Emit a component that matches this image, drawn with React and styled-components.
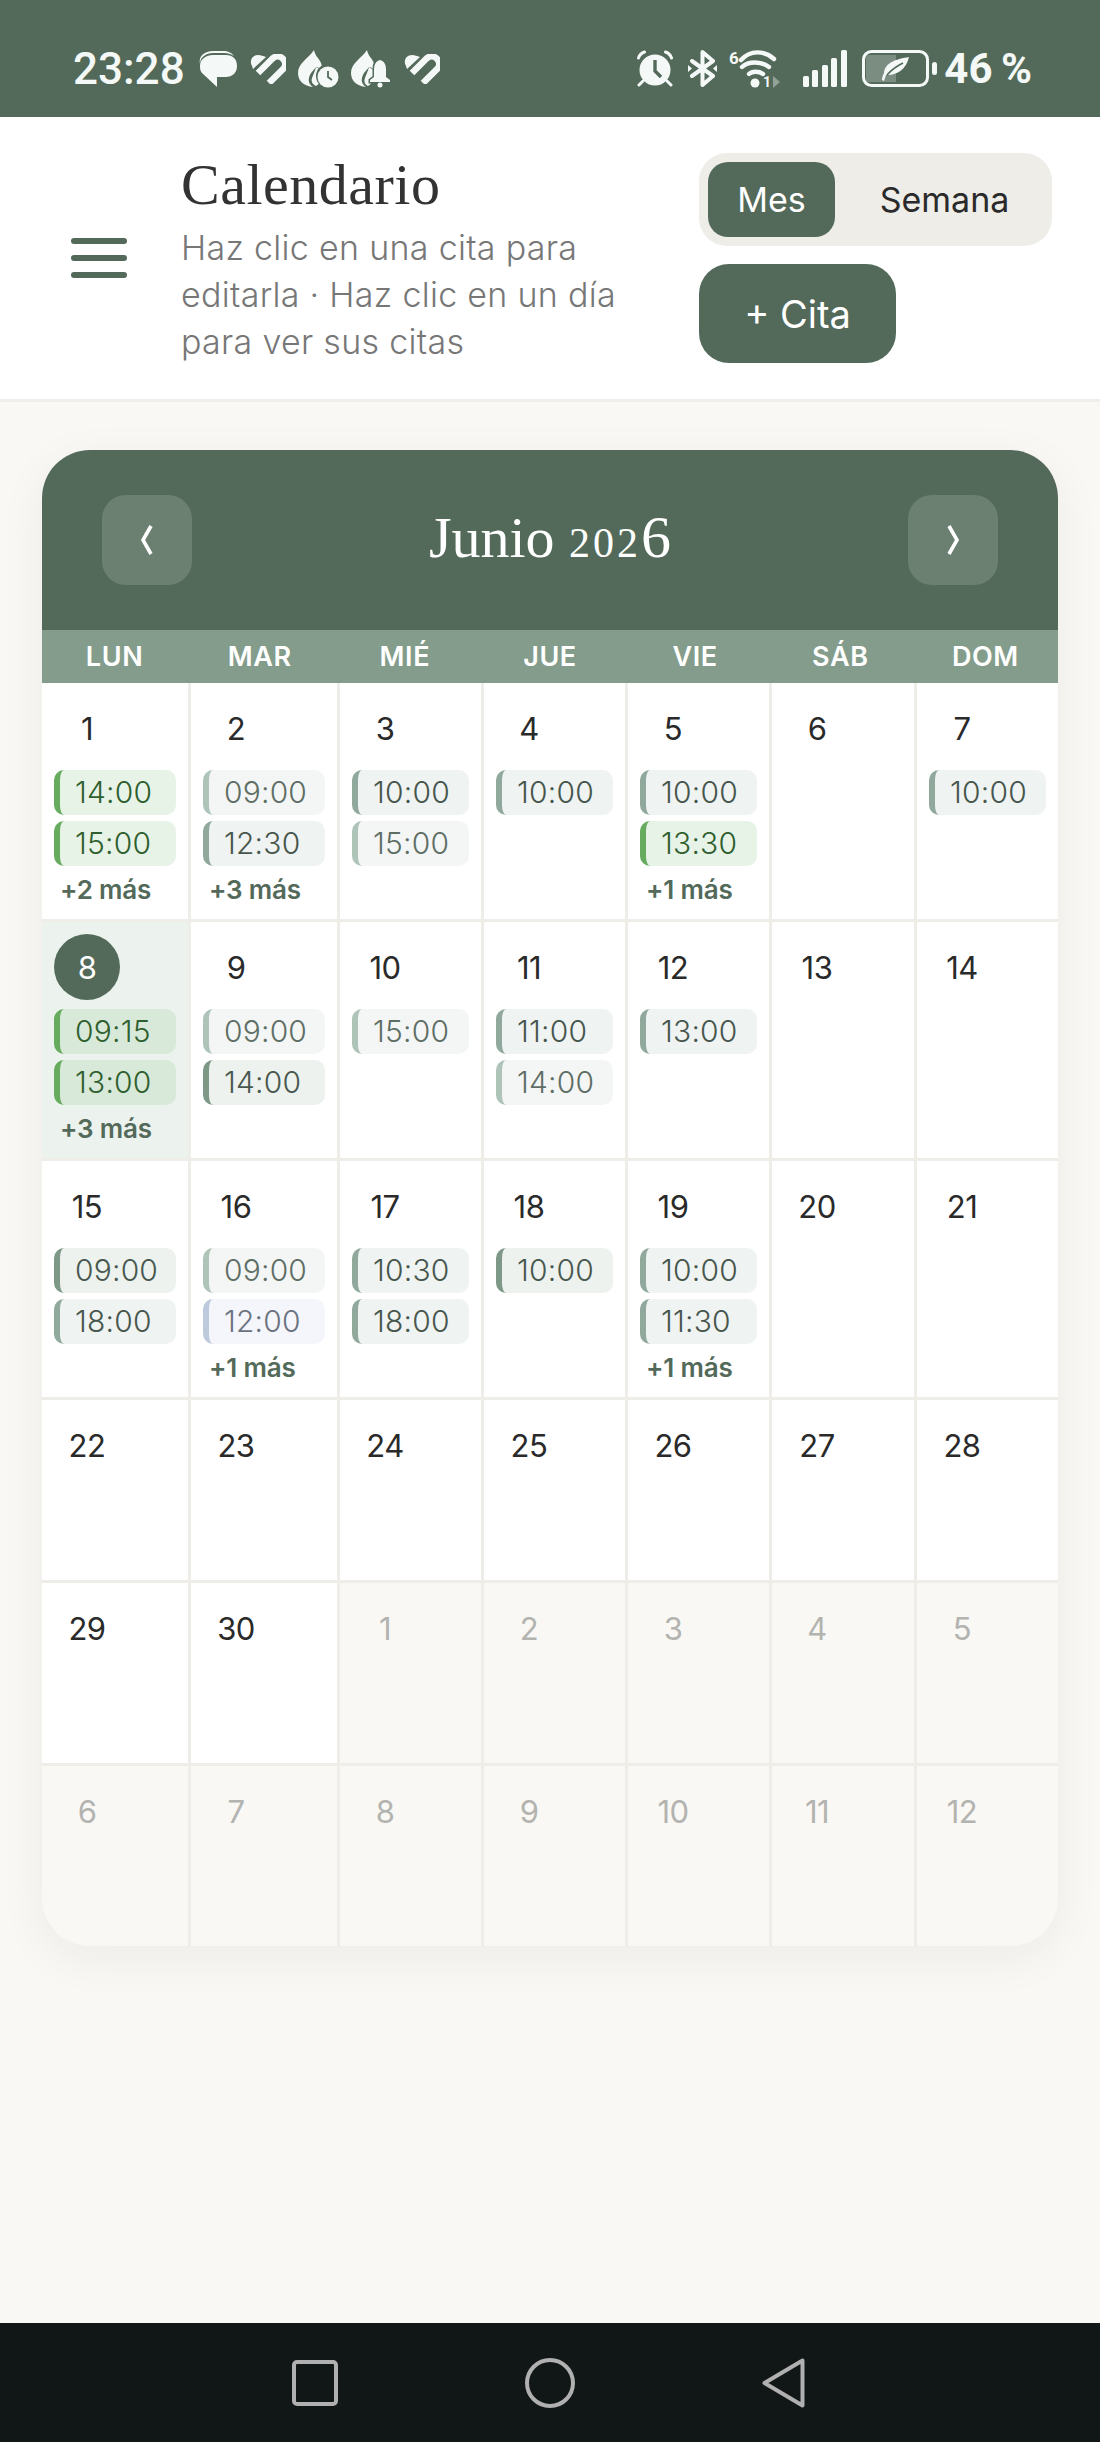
import React from "react";
import styled, { createGlobalStyle } from "styled-components";

const Global = createGlobalStyle`
  html, body { margin: 0; padding: 0; background: #f9f8f4; }
  * { box-sizing: border-box; }
  body { font-family: "Inter", "Liberation Sans", sans-serif; }
`;

const Page = styled.div`
  width: 1100px;
  height: 2442px;
  display: flex;
  flex-direction: column;
  overflow: hidden;
`;

/* ---------- status bar ---------- */
const StatusBar = styled.div`
  height: 117px;
  flex: none;
  background: #536a5a;
  color: #f4f8f6;
  padding: 20px 68px 0 73px;
  display: flex;
  align-items: center;
  justify-content: space-between;
`;
const StatusGroup = styled.div`
  display: flex;
  align-items: center;
  gap: ${(p) => p.$gap || 0}px;
`;
const Clock = styled.span`
  font-family: "Roboto", sans-serif;
  font-weight: 500;
  font-size: 44px;
  line-height: 46px;
`;
const Percent = styled.span`
  font-family: "Roboto", sans-serif;
  font-weight: 700;
  font-size: 42px;
  line-height: 46px;
  margin-left: 7px;
  word-spacing: -2px;
`;
const StatusSvg = styled.svg`
  display: block;
  flex: none;
  margin-left: ${(p) => p.$ml || 0}px;
  margin-bottom: ${(p) => p.$mb || 0}px;
`;
const bar = "#536a5a";

const Bubble = () => (
  <StatusSvg width="41" height="38" viewBox="0 0 41 38">
    <path d="M3 14C1 6 8 1 16 1h10c5 0 9 2 11 5-3-2-6-3-10-3H16C9 3 3 7 3 14z" fill="currentColor" />
    <path d="M16 5h13c7 0 11 4 11 11s-5 11-11 11h-9v10L5 23C3 21 3 18 3 16 3 9 9 5 16 5z" fill="currentColor" />
  </StatusSvg>
);
const Heart = () => (
  <StatusSvg width="36" height="30" viewBox="0 0 36 30">
    <path d="M2 12C-1 7 2 1 8 1c3 0 5 1 8 2L3 15z" fill="currentColor" />
    <path d="M8 19L22.500 4.500a7.500 7.500 0 0 1 10.600 10.600L19 29" fill="none" stroke="currentColor" strokeWidth="6.500" />
  </StatusSvg>
);
const Flame = () => (
  <path d="M16 0c1 6 5 8 7 13 1 3 1 5 0 7-2-2-3-3-5-3-2 3-6 6-7 11-1 4 1 7 4 9C6 36 0 31 0 23 0 13 10 9 16 0z" fill="currentColor" />
);
const FlameClock = () => (
  <StatusSvg width="41" height="38" viewBox="0 0 41 38">
    <Flame />
    <path d="M18 17c3 2 7 3 7 8s-4 9-7 11c-4-2-5-5-4-8s3-7 4-11z" fill="currentColor" />
    <circle cx="30" cy="26" r="12" fill={bar} />
    <circle cx="30" cy="27" r="10.500" fill="currentColor" />
    <path d="M30 21v6l4 3" fill="none" stroke={bar} strokeWidth="1.800" />
  </StatusSvg>
);
const FlameBell = () => (
  <StatusSvg width="41" height="38" viewBox="0 0 41 38">
    <Flame />
    <path d="M18 17c3 2 6 3 6 8s-4 9-7 11c-4-2-4-5-3-8s3-7 4-11z" fill="currentColor" />
    <path d="M29 8c5 2 7 5 7 11v8l4 3v2H19v-2l4-3v-8c0-6 2-9 6-11z" fill={bar} stroke={bar} strokeWidth="3" />
    <path d="M29 10c4 1 6 4 6 10v7l4 3v2H19v-2l4-3v-7c0-6 2-9 6-10z" fill="currentColor" />
    <circle cx="29" cy="35" r="2.500" fill="currentColor" />
  </StatusSvg>
);
const Alarm = () => (
  <StatusSvg width="38" height="37" viewBox="0 0 38 37">
    <circle cx="19" cy="20" r="15.500" fill="currentColor" />
    <path d="M19 10v11l6 6" fill="none" stroke={bar} strokeWidth="3.400" />
    <path d="M2.500 8c1-3 3-5 6-6M35.500 8c-1-3-3-5-6-6M7 31l-4 4M31 31l4 4" fill="none" stroke="currentColor" strokeWidth="3" strokeLinecap="round" />
  </StatusSvg>
);
const Bluetooth = () => (
  <StatusSvg width="29" height="37" viewBox="0 0 29 37" $ml={14}>
    <path d="M4 11l21 15-10.500 9V2L25 11 4 26" fill="none" stroke="currentColor" strokeWidth="4" strokeLinejoin="round" strokeLinecap="round" />
    <path d="M0 15l4 3.500-4 3.500zM29 15l-4 3.500 4 3.500z" fill="currentColor" />
  </StatusSvg>
);
const WifiLabel = styled.text`
  font-family: "Roboto", sans-serif;
  font-weight: 700;
  font-size: ${(p) => p.$size}px;
  fill: currentColor;
`;
const Wifi = () => (
  <StatusSvg width="53" height="45" viewBox="0 0 53 45" $ml={11} $mb={-6}>
    <WifiLabel x="1" y="15" $size="17">6</WifiLabel>
    <path d="M13 11C22 1 36 1 46 10" fill="none" stroke="currentColor" strokeWidth="4.400" strokeLinecap="round" />
    <path d="M14 18c6-6 19-6 27 0" fill="none" stroke="currentColor" strokeWidth="4.400" strokeLinecap="round" />
    <path d="M21 25c3-3 10-3 14 0" fill="none" stroke="currentColor" strokeWidth="4.400" strokeLinecap="round" />
    <circle cx="27" cy="34" r="4.500" fill="currentColor" />
    <WifiLabel x="35" y="38" $size="14">1</WifiLabel>
    <path d="M45 27l7 6-7 6z" fill="currentColor" opacity=".4" />
  </StatusSvg>
);
const Signal = () => (
  <StatusSvg width="44" height="37" viewBox="0 0 44 37" $ml={22}>
    {[[0, 11], [9, 17], [19, 22], [28, 29], [38, 37]].map(([x, h]) => (
      <rect key={x} x={x} y={37 - h} width="6" height={h} rx="1.500" fill="currentColor" />
    ))}
  </StatusSvg>
);
const Battery = () => (
  <StatusSvg width="75" height="37" viewBox="0 0 75 37" $ml={15}>
    <rect x="1.500" y="1.500" width="64" height="34" rx="8" fill="none" stroke="currentColor" strokeWidth="3" />
    <path d="M6 5h28v27H6a2 2 0 0 1-2-2V7a2 2 0 0 1 2-2z" fill="currentColor" opacity=".25" />
    <path d="M47 7c-12 2-24 5-25 16-1 2-2 4-2 7l2 1 2-6c8 1 20-4 23-18z" fill="currentColor" />
    <path d="M25 25c5-6 10-9 16-12" fill="none" stroke={bar} strokeWidth="1.600" />
    <rect x="70" y="12" width="5" height="13" rx="2.500" fill="currentColor" />
  </StatusSvg>
);

/* ---------- header ---------- */
const Header = styled.header`
  flex: none;
  background: #fff;
  border-bottom: 3px solid #efeee9;
  padding: 36px 48px 36px 71px;
  display: flex;
  align-items: center;
`;
const MenuButton = styled.div`
  width: 56px;
  flex: none;
  margin-right: 54px;
  display: flex;
  flex-direction: column;
  gap: 11px;
`;
const MenuBar = styled.span`
  display: block;
  height: 6px;
  border-radius: 3px;
  background: #536a5a;
`;
const TitleBlock = styled.div`
  flex: 1;
  min-width: 0;
  padding-right: 20px;
  margin-bottom: -2px;
`;
const Title = styled.h1`
  margin: 0 0 7px;
  font-family: "Liberation Serif", serif;
  font-weight: 400;
  font-size: 58px;
  line-height: 64px;
  letter-spacing: 0.5px;
  color: #333;
`;
const Subtitle = styled.p`
  margin: 0;
  font-size: 34px;
  line-height: 47px;
  font-weight: 300;
  letter-spacing: 0.3px;
  color: #777;
`;
const Actions = styled.div`
  width: 353px;
  flex: none;
  display: flex;
  flex-direction: column;
  align-items: flex-start;
  gap: 18px;
`;
const Toggle = styled.div`
  width: 353px;
  height: 93px;
  padding: 9px;
  border-radius: 28px;
  background: #eeede8;
  display: flex;
`;
const ToggleOption = styled.div`
  height: 75px;
  display: flex;
  align-items: center;
  justify-content: center;
  font-size: 34px;
  font-weight: 400;
  border-radius: 20px;
  width: ${(p) => (p.$active ? "127px" : "auto")};
  flex: ${(p) => (p.$active ? "none" : 1)};
  padding-left: ${(p) => (p.$active ? 0 : 11)}px;
  background: ${(p) => (p.$active ? "#536a5a" : "transparent")};
  color: ${(p) => (p.$active ? "#fff" : "#2a2a2a")};
`;
const AddButton = styled.div`
  width: 197px;
  height: 99px;
  border-radius: 30px;
  background: #536a5a;
  color: #fff;
  display: flex;
  align-items: center;
  justify-content: center;
  font-size: 38px;
  font-weight: 400;
`;

/* ---------- calendar ---------- */
const Main = styled.main`
  flex: 1;
  min-height: 0;
  padding: 48px 42px 0;
  background: #f9f8f4;
`;
const Card = styled.section`
  border-radius: 48px;
  overflow: hidden;
  background: #fff;
  box-shadow: 0 12px 48px rgba(40, 40, 30, 0.06);
`;
const CardHead = styled.div`
  height: 180px;
  background: #536a5a;
  padding: 45px 60px;
  display: flex;
  align-items: center;
  justify-content: space-between;
`;
const NavButton = styled.div`
  width: 90px;
  height: 90px;
  border-radius: 24px;
  background: rgba(255, 255, 255, 0.15);
  display: flex;
  align-items: center;
  justify-content: center;
  color: #fff;
`;
const Chevron = styled.svg`
  display: block;
`;
const Month = styled.h2`
  margin: 0;
  font-family: "Liberation Serif", serif;
  font-weight: 400;
  font-size: 58px;
  line-height: 66px;
  color: #fff;
  display: flex;
  align-items: baseline;
  white-space: pre;
`;
const OldNum = styled.span`
  font-size: ${(p) => p.$size}px;
  letter-spacing: ${(p) => p.$track || 0}px;
`;
const Weekdays = styled.div`
  height: 53px;
  display: grid;
  grid-template-columns: repeat(7, 1fr);
  background: #839c8b;
`;
const Weekday = styled.div`
  display: flex;
  align-items: center;
  justify-content: center;
  color: #fff;
  font-size: 27px;
  font-weight: 600;
  letter-spacing: 0.6px;
`;
const Grid = styled.div`
  display: grid;
  grid-template-columns: 146px 146px 141px 141px 141px 142px 141px;
  gap: 3px;
  background: #eeede8;
`;
const Cell = styled.div`
  min-height: 180px;
  padding: 12px;
  background: ${(p) => (p.$today ? "#ecf3ef" : p.$other ? "#f9f8f4" : "#fff")};
`;
const DayNumber = styled.div`
  width: 66px;
  height: 66px;
  border-radius: 50%;
  display: flex;
  align-items: center;
  justify-content: center;
  font-size: 31px;
  font-weight: 400;
  letter-spacing: -0.5px;
  margin-bottom: 9px;
  color: ${(p) => (p.$today ? "#fff" : p.$other ? "#b3b3b0" : "#2a2a2a")};
  background: ${(p) => (p.$today ? "#536a5a" : "transparent")};
`;
const Events = styled.div`
  display: flex;
  flex-direction: column;
  gap: 6px;
`;
const kinds = {
  green: { bg: "#e8f3e8", line: "#66ab5e", text: "#2f5f2f" },
  today: { bg: "#d8e9da", line: "#66ab5e", text: "#2f5f2f" },
  mid: { bg: "#eff3f2", line: "#90a99c", text: "#47564d" },
  light: { bg: "#f4f6f5", line: "#afc4b8", text: "#5e6e65" },
  dark: { bg: "#edf2ef", line: "#7e9888", text: "#48584f" },
  blue: { bg: "#f4f6fb", line: "#bdc9dc", text: "#6b7280" },
};
const Pill = styled.div`
  height: 45px;
  line-height: 44px;
  padding-left: 15px;
  border-left: 6px solid ${(p) => kinds[p.$kind].line};
  border-radius: 10px;
  background: ${(p) => kinds[p.$kind].bg};
  color: ${(p) => kinds[p.$kind].text};
  font-size: 30px;
  font-weight: 350;
  letter-spacing: 0.2px;
  white-space: nowrap;
`;
const More = styled.div`
  height: 35px;
  line-height: 35px;
  padding-left: 6px;
  font-size: 26px;
  font-weight: 600;
  letter-spacing: -0.2px;
  color: #536a5a;
`;

const days = [
  { n: 1, e: [["14:00", "green"], ["15:00", "green"]], more: 2 },
  { n: 2, e: [["09:00", "light"], ["12:30", "mid"]], more: 3 },
  { n: 3, e: [["10:00", "mid"], ["15:00", "light"]] },
  { n: 4, e: [["10:00", "mid"]] },
  { n: 5, e: [["10:00", "mid"], ["13:30", "green"]], more: 1 },
  { n: 6 },
  { n: 7, e: [["10:00", "mid"]] },
  { n: 8, today: true, e: [["09:15", "today"], ["13:00", "today"]], more: 3 },
  { n: 9, e: [["09:00", "light"], ["14:00", "dark"]] },
  { n: 10, e: [["15:00", "light"]] },
  { n: 11, e: [["11:00", "mid"], ["14:00", "light"]] },
  { n: 12, e: [["13:00", "mid"]] },
  { n: 13 },
  { n: 14 },
  { n: 15, e: [["09:00", "dark"], ["18:00", "mid"]] },
  { n: 16, e: [["09:00", "light"], ["12:00", "blue"]], more: 1 },
  { n: 17, e: [["10:30", "mid"], ["18:00", "mid"]] },
  { n: 18, e: [["10:00", "dark"]] },
  { n: 19, e: [["10:00", "mid"], ["11:30", "mid"]], more: 1 },
  { n: 20 },
  { n: 21 },
  ...[22, 23, 24, 25, 26, 27, 28, 29, 30].map((n) => ({ n })),
  ...[1, 2, 3, 4, 5, 6, 7, 8, 9, 10, 11, 12].map((n) => ({ n, other: true })),
];

/* ---------- nav bar ---------- */
const NavBar = styled.nav`
  height: 119px;
  flex: none;
  background: #101716;
  display: flex;
  align-items: center;
  justify-content: center;
  gap: 187px;
  padding-right: 3px;
`;

export default function App() {
  return (
    <Page>
      <Global />
      <StatusBar>
        <StatusGroup $gap={12}>
          <Clock>23:28</Clock>
          <Bubble />
          <Heart />
          <FlameClock />
          <FlameBell />
          <Heart />
        </StatusGroup>
        <StatusGroup>
          <Alarm />
          <Bluetooth />
          <Wifi />
          <Signal />
          <Battery />
          <Percent>46 %</Percent>
        </StatusGroup>
      </StatusBar>

      <Header>
        <MenuButton>
          <MenuBar />
          <MenuBar />
          <MenuBar />
        </MenuButton>
        <TitleBlock>
          <Title>Calendario</Title>
          <Subtitle>Haz clic en una cita para editarla · Haz clic en un día para ver sus citas</Subtitle>
        </TitleBlock>
        <Actions>
          <Toggle>
            <ToggleOption $active>Mes</ToggleOption>
            <ToggleOption>Semana</ToggleOption>
          </Toggle>
          <AddButton>+ Cita</AddButton>
        </Actions>
      </Header>

      <Main>
        <Card>
          <CardHead>
            <NavButton aria-label="Anterior">
              <Chevron width="14" height="30" viewBox="0 0 14 30">
                <path d="M11 1L3 15l8 14" fill="none" stroke="currentColor" strokeWidth="3.600" />
              </Chevron>
            </NavButton>
            <Month>
              Junio <OldNum $size={42} $track={3}>202</OldNum>
              <OldNum $size={60}>6</OldNum>
            </Month>
            <NavButton aria-label="Siguiente">
              <Chevron width="14" height="30" viewBox="0 0 14 30">
                <path d="M3 1l8 14-8 14" fill="none" stroke="currentColor" strokeWidth="3.600" />
              </Chevron>
            </NavButton>
          </CardHead>
          <Weekdays>
            {["LUN", "MAR", "MIÉ", "JUE", "VIE", "SÁB", "DOM"].map((d) => (
              <Weekday key={d}>{d}</Weekday>
            ))}
          </Weekdays>
          <Grid>
            {days.map((d, i) => (
              <Cell key={i} $today={d.today} $other={d.other}>
                <DayNumber $today={d.today} $other={d.other}>{d.n}</DayNumber>
                {d.e && (
                  <Events>
                    {d.e.map(([t, k]) => (
                      <Pill key={t} $kind={k}>{t}</Pill>
                    ))}
                    {d.more && <More>+{d.more} más</More>}
                  </Events>
                )}
              </Cell>
            ))}
          </Grid>
        </Card>
      </Main>

      <NavBar>
        <svg width="46" height="46" viewBox="0 0 46 46">
          <rect x="2" y="2" width="42" height="42" rx="3" fill="none" stroke="#b0b0b0" strokeWidth="4" />
        </svg>
        <svg width="50" height="50" viewBox="0 0 50 50">
          <circle cx="25" cy="25" r="23" fill="none" stroke="#b0b0b0" strokeWidth="4" />
        </svg>
        <svg width="43" height="50" viewBox="0 0 43 50">
          <path d="M40.500 2.500v45L2.500 25z" fill="none" stroke="#b0b0b0" strokeWidth="4" strokeLinejoin="round" />
        </svg>
      </NavBar>
    </Page>
  );
}
